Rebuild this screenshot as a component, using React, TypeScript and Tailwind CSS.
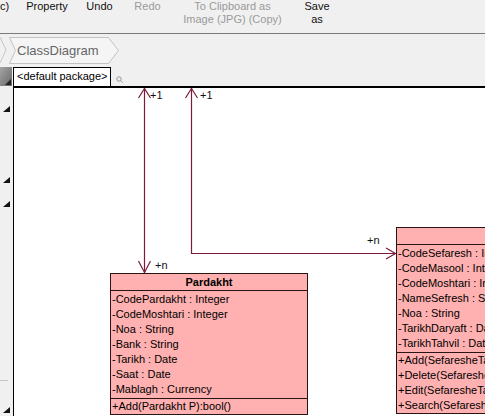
import React from 'react';

const pink = 'bg-[#ffb0b0]';

type ClassBoxProps = {
  name: string;
  attrs: string[];
  ops: string[];
  className: string;
};

function ClassBox({ name, attrs, ops, className }: ClassBoxProps) {
  return (
    <div className={`absolute border border-[#2a1414] ${pink} text-[11px] text-black ${className}`}>
      <div className="h-[17px] border-b border-[#2a1414] text-center font-bold leading-[16px] whitespace-nowrap">
        {name}
      </div>
      <div className="pt-[1px] pb-[1px]">
        {attrs.map((a) => (
          <div key={a} className="h-[15px] pl-[1px] leading-[15px] whitespace-nowrap">
            {a}
          </div>
        ))}
      </div>
      <div className="border-t border-[#2a1414]">
        {ops.map((o) => (
          <div key={o} className="h-[15px] pl-[1px] leading-[15px] whitespace-nowrap">
            {o}
          </div>
        ))}
      </div>
    </div>
  );
}

// little black corner marks on the left rail
function Corner({ top }: { top: number }) {
  return (
    <svg className="absolute left-[3px]" style={{ top }} width="7" height="6" viewBox="0 0 7 6">
      <polygon points="7,0 7,6 0,6" fill="#111" />
    </svg>
  );
}

export default function App() {
  const line = '#7c1c3c';

  return (
    <div
      className="w-[485px] h-[416px] overflow-hidden bg-[#f0f0f0] flex flex-col"
      style={{ fontFamily: '"Liberation Sans", Arial, sans-serif' }}
    >
      {/* toolbar */}
      <div className="h-[34px] shrink-0 border-b border-[#7a7a7a] flex items-start text-[11px] leading-[13px] text-[#111]">
        <div className="w-[20px] text-left">c)</div>
        <div className="w-[54px] text-center">Property</div>
        <div className="ml-[6px] w-[39px] text-center">Undo</div>
        <div className="ml-[9px] w-[39px] text-center text-[#9a9a9a]">Redo</div>
        <div className="ml-[13px] w-[105px] text-center text-[#9a9a9a]">
          To Clipboard as
          <br />
          Image (JPG) (Copy)
        </div>
        <div className="ml-[12px] w-[40px] text-center">
          Save
          <br />
          as
        </div>
      </div>

      {/* breadcrumb */}
      <div className="h-[33px] shrink-0 relative">
        <svg className="absolute left-0 top-0" width="130" height="33" viewBox="0 0 130 33">
          <polyline points="0,3 6,16 0,29" fill="none" stroke="#c6c6c6" />
          <polygon points="9.5,3.5 108.5,3.5 118.5,16.5 108.5,29.5 9.5,29.5 15.5,16.5" fill="#f5f5f5" stroke="#c3c3c3" />
        </svg>
        <div className="relative pl-[17px] pt-[9px] text-[13px] leading-[16px] text-[#666]">ClassDiagram</div>
      </div>

      <div className="flex-1 flex min-h-0">
        {/* left rail */}
        <div className="w-[13px] shrink-0 relative">
          <div className="h-[19px] w-[12px] bg-gradient-to-br from-[#a4a4a4] to-[#6a6a6a] relative">
            <svg className="absolute right-[1px] bottom-[1px]" width="6" height="6" viewBox="0 0 6 6">
              <polygon points="6,0 6,6 0,6" fill="#222" />
            </svg>
          </div>
          <Corner top={39} />
          <Corner top={110} />
          <Corner top={134} />
          <div className="absolute left-0 top-[313px] w-[8px] h-px bg-[#c4c4c4]" />
          <Corner top={340} />
        </div>

        {/* diagram */}
        <div className="flex-1 border-l border-black flex flex-col min-w-0">
          <div className="h-[19px] shrink-0 flex items-stretch">
            <div className="w-[97px] bg-white border-t border-r border-black text-[11px] leading-[17px] pl-[3px] text-black whitespace-nowrap">
              &lt;default package&gt;
            </div>
            <div className="pl-[5px] pt-[9px]">
              <svg width="7" height="7" viewBox="0 0 7 7">
                <circle cx="3" cy="3" r="2.2" fill="none" stroke="#9a9a9a" />
                <line x1="4.6" y1="4.6" x2="6.6" y2="6.6" stroke="#9a9a9a" />
              </svg>
            </div>
          </div>
          <div className="h-[2px] shrink-0 bg-black" />

          <div className="flex-1 relative bg-white text-[11px] text-[#111]">
            <svg className="absolute left-0 top-0" width="471" height="330" viewBox="0 0 471 330">
              <g stroke={line} strokeWidth="1.2" fill="none">
                <line x1="130.5" y1="0" x2="130.5" y2="185" />
                <polyline points="124.5,10 130.5,0.5 136.5,10" />
                <polyline points="124.5,173 130.5,184.5 136.5,173" />
                <polyline points="177.5,0 177.5,165.5 382,165.5" />
                <polyline points="171.5,10 177.5,0.5 183.5,10" />
                <polyline points="372,160 381.5,165.5 372,171" />
              </g>
            </svg>
            <span className="absolute left-[136px] top-[1px] leading-[13px]">+1</span>
            <span className="absolute left-[186px] top-[1px] leading-[13px]">+1</span>
            <span className="absolute left-[141px] top-[171px] leading-[13px]">+n</span>
            <span className="absolute left-[353px] top-[146px] leading-[13px]">+n</span>

            <ClassBox
              className="left-[96px] top-[185px] w-[198px]"
              name="Pardakht"
              attrs={[
                '-CodePardakht : Integer',
                '-CodeMoshtari : Integer',
                '-Noa : String',
                '-Bank : String',
                '-Tarikh : Date',
                '-Saat : Date',
                '-Mablagh : Currency',
              ]}
              ops={['+Add(Pardakht P):bool()']}
            />
            <ClassBox
              className="left-[382px] top-[139px] w-[200px]"
              name=""
              attrs={[
                '-CodeSefaresh : Integer',
                '-CodeMasool : Integer',
                '-CodeMoshtari : Integer',
                '-NameSefresh : String',
                '-Noa : String',
                '-TarikhDaryaft : Date',
                '-TarikhTahvil : Date',
              ]}
              ops={[
                '+Add(SefaresheTamam S):bool()',
                '+Delete(SefaresheTamam S):bool()',
                '+Edit(SefaresheTamam S):bool()',
                '+Search(SefaresheTamam S):bool()',
              ]}
            />
          </div>
        </div>
      </div>
    </div>
  );
}
